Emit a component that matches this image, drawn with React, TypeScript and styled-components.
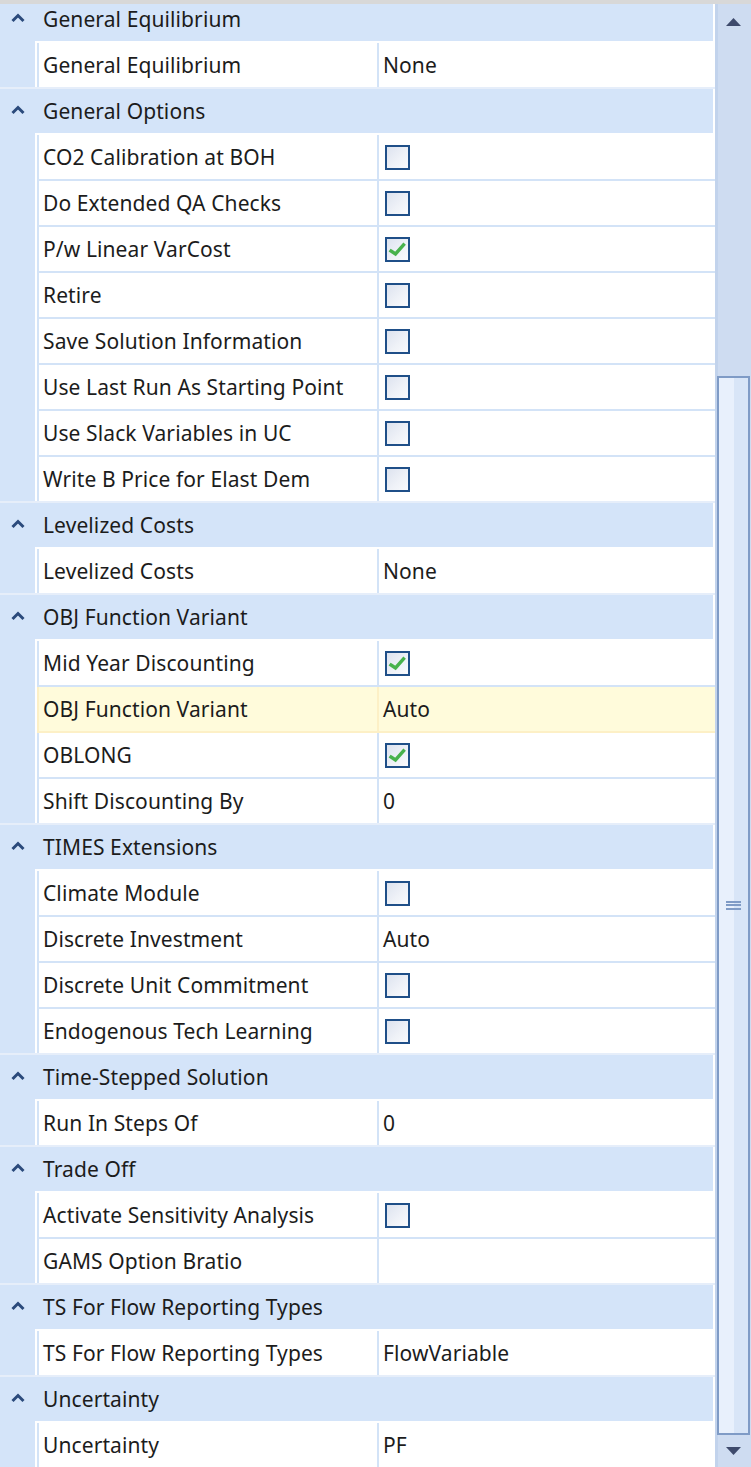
import React from "react";
import styled, { createGlobalStyle } from "styled-components";

type Value =
  | { kind: "check"; on: boolean }
  | { kind: "text"; text: string };

interface Prop {
  label: string;
  value: Value;
  highlight?: boolean;
}

interface Group {
  title: string;
  items: Prop[];
}

const box = (on: boolean): Value => ({ kind: "check", on });
const txt = (text: string): Value => ({ kind: "text", text });

const groups: Group[] = [
  { title: "General Equilibrium", items: [{ label: "General Equilibrium", value: txt("None") }] },
  {
    title: "General Options",
    items: [
      { label: "CO2 Calibration at BOH", value: box(false) },
      { label: "Do Extended QA Checks", value: box(false) },
      { label: "P/w Linear VarCost", value: box(true) },
      { label: "Retire", value: box(false) },
      { label: "Save Solution Information", value: box(false) },
      { label: "Use Last Run As Starting Point", value: box(false) },
      { label: "Use Slack Variables in UC", value: box(false) },
      { label: "Write B Price for Elast Dem", value: box(false) },
    ],
  },
  { title: "Levelized Costs", items: [{ label: "Levelized Costs", value: txt("None") }] },
  {
    title: "OBJ Function Variant",
    items: [
      { label: "Mid Year Discounting", value: box(true) },
      { label: "OBJ Function Variant", value: txt("Auto"), highlight: true },
      { label: "OBLONG", value: box(true) },
      { label: "Shift Discounting By", value: txt("0") },
    ],
  },
  {
    title: "TIMES Extensions",
    items: [
      { label: "Climate Module", value: box(false) },
      { label: "Discrete Investment", value: txt("Auto") },
      { label: "Discrete Unit Commitment", value: box(false) },
      { label: "Endogenous Tech Learning", value: box(false) },
    ],
  },
  { title: "Time-Stepped Solution", items: [{ label: "Run In Steps Of", value: txt("0") }] },
  {
    title: "Trade Off",
    items: [
      { label: "Activate Sensitivity Analysis", value: box(false) },
      { label: "GAMS Option Bratio", value: txt("") },
    ],
  },
  {
    title: "TS For Flow Reporting Types",
    items: [{ label: "TS For Flow Reporting Types", value: txt("FlowVariable") }],
  },
  { title: "Uncertainty", items: [{ label: "Uncertainty", value: txt("PF") }] },
];

const GlobalStyle = createGlobalStyle`
  html, body {
    margin: 0;
    padding: 0;
    background: #ffffff;
  }
  body {
    font-family: "Noto Sans", "Open Sans", sans-serif;
    color: #1c1c1c;
  }
`;

const Frame = styled.div`
  width: 751px;
  height: 1467px;
  box-sizing: border-box;
  border-top: 4px solid #d8d8d8;
  display: flex;
  overflow: hidden;
  background: #ffffff;
`;

const Viewport = styled.div`
  width: 715px;
  flex: none;
  overflow: hidden;
`;

const List = styled.div`
  margin-top: -7px;
  display: flex;
  flex-direction: column;
`;

const GroupBlock = styled.section`
  display: flex;
  flex-direction: column;
`;

const HeaderBar = styled.div`
  height: 44px;
  box-sizing: border-box;
  display: flex;
  align-items: center;
  background: #d4e4f9;
  border-right: 2px solid #ffffff;
  font-size: 21px;
  letter-spacing: 0.1px;
`;

const HeaderRule = styled.div`
  height: 2px;
  display: flex;
  &::before {
    content: "";
    width: 35px;
    background: #d4e4f9;
  }
  &::after {
    content: "";
    flex: 1;
    background: #ffffff;
  }
`;

const Chevron = styled.svg`
  width: 14px;
  height: 10px;
  margin: -3px 18px 0 11px;
  flex: none;
`;

const Row = styled.div<{ $last: boolean; $highlight?: boolean }>`
  height: 46px;
  display: flex;
  font-size: 21px;
  letter-spacing: 0.1px;
  background: ${(p) => (p.$highlight ? "#fffbdb" : "#ffffff")};
  border-bottom: 2px solid ${(p) => (p.$highlight ? "#fdf0c6" : "#d3e3f7")};
  box-sizing: border-box;
  ${(p) => (p.$last ? "border-bottom-color: #e6eefa;" : "")}
`;

const Gutter = styled.div<{ $last: boolean }>`
  width: 35px;
  flex: none;
  background: #d4e4f9;
  border-right: 2px solid #ffffff;
  margin-bottom: ${(p) => (p.$last ? "0" : "-2px")};
`;

const LabelCell = styled.div<{ $highlight?: boolean }>`
  width: 334px;
  flex: none;
  display: flex;
  align-items: center;
  padding-left: 4px;
  border-left: 2px solid ${(p) => (p.$highlight ? "#fdf0c6" : "#d3e3f7")};
  border-right: 2px solid ${(p) => (p.$highlight ? "#fdf0c6" : "#d3e3f7")};
  box-sizing: content-box;
  white-space: nowrap;
  overflow: hidden;
`;

const ValueCell = styled.div`
  flex: 1;
  display: flex;
  align-items: center;
  padding-left: 4px;
  white-space: nowrap;
`;

const CheckBox = styled.span`
  width: 25px;
  height: 25px;
  margin-left: 2px;
  box-sizing: border-box;
  border: 2px solid #1f4f88;
  background: linear-gradient(135deg, #dde3ef 0%, #eef1f7 55%, #f9fafd 100%);
  display: flex;
  align-items: center;
  justify-content: center;
`;

const ScrollBar = styled.div`
  flex: 1;
  display: flex;
  flex-direction: column;
  background: #cedcf1;
  border-left: 3px solid #c2d3ec;
`;

const ArrowButton = styled.div<{ $h: number }>`
  height: ${(p) => p.$h}px;
  flex: none;
  display: flex;
  align-items: center;
  justify-content: center;
  padding-right: 2px;
`;

const Track = styled.div`
  flex: 1;
  display: flex;
  flex-direction: column;
`;

const Thumb = styled.div`
  flex: none;
  margin-left: -1px;
  margin-right: 1px;
  box-sizing: border-box;
  border: 2px solid #7f9bc6;
  background: linear-gradient(90deg, #e8f0fc 0%, #e8f0fc 50%, #d8e5f7 50%, #d8e5f7 100%);
  display: flex;
  align-items: center;
  justify-content: center;
`;

const Grip = styled.span`
  width: 15px;
  height: 9px;
  background: repeating-linear-gradient(
    180deg,
    #7f9bc6 0px,
    #7f9bc6 2px,
    transparent 2px,
    transparent 3.5px
  );
`;

function CheckMark() {
  return (
    <svg width="19" height="17" viewBox="0 0 19 17">
      <path
        d="M3 10 L7.5 13 L15.5 4"
        fill="none"
        stroke="#48b24c"
        strokeWidth="3.4"
        strokeLinecap="square"
      />
    </svg>
  );
}

function Triangle({ up }: { up: boolean }) {
  return (
    <svg width="15" height="8" viewBox="0 0 15 8">
      <polygon points={up ? "7.5,0 15,8 0,8" : "0,0 15,0 7.5,8"} fill="#3e4a6c" />
    </svg>
  );
}

function PropRow({ item, last }: { item: Prop; last: boolean }) {
  return (
    <Row $last={last} $highlight={item.highlight}>
      <Gutter $last={last} />
      <LabelCell $highlight={item.highlight}>{item.label}</LabelCell>
      <ValueCell>
        {item.value.kind === "check" ? (
          <CheckBox>{item.value.on && <CheckMark />}</CheckBox>
        ) : (
          item.value.text
        )}
      </ValueCell>
    </Row>
  );
}

export default function App() {
  return (
    <>
      <GlobalStyle />
      <Frame>
        <Viewport>
          <List>
            {groups.map((g) => (
              <GroupBlock key={g.title}>
                <HeaderBar>
                  <Chevron viewBox="0 0 14 10">
                    <polyline
                      points="1.5,8 7,2.5 12.5,8"
                      fill="none"
                      stroke="#2b4a7c"
                      strokeWidth="3"
                    />
                  </Chevron>
                  {g.title}
                </HeaderBar>
                <HeaderRule />
                {g.items.map((it, i) => (
                  <PropRow key={it.label} item={it} last={i === g.items.length - 1} />
                ))}
              </GroupBlock>
            ))}
          </List>
        </Viewport>
        <ScrollBar>
          <ArrowButton $h={36}>
            <Triangle up />
          </ArrowButton>
          <Track>
            <div style={{ height: 336, flex: "none" }} />
            <Thumb style={{ height: 1059 }}>
              <Grip />
            </Thumb>
          </Track>
          <ArrowButton $h={32}>
            <Triangle up={false} />
          </ArrowButton>
        </ScrollBar>
      </Frame>
    </>
  );
}
